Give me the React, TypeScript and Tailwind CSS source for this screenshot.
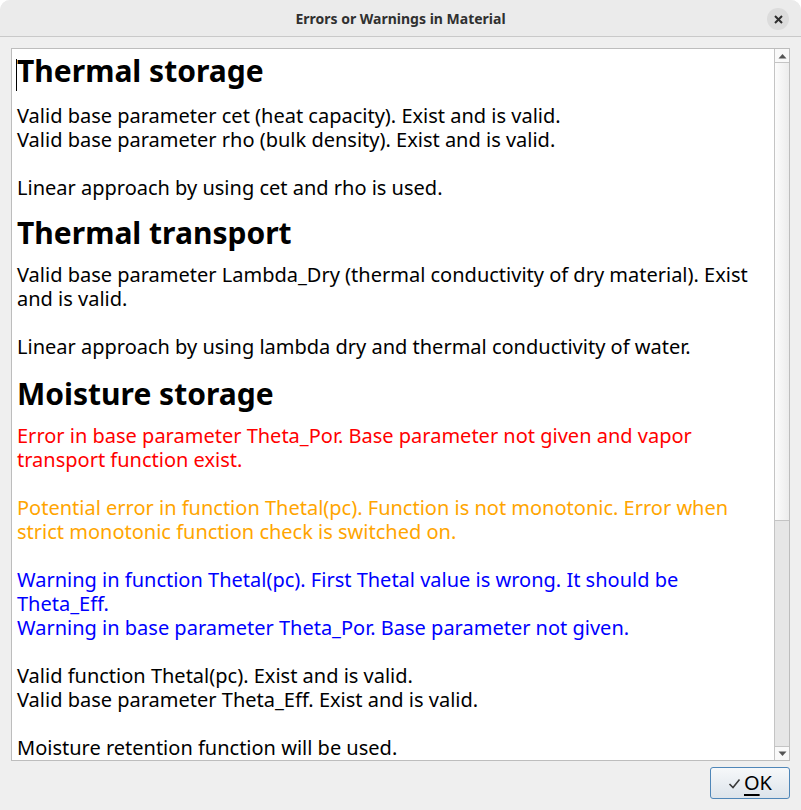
import React from "react";

function Para({ lines, color }: { lines: string[]; color: string }) {
  return (
    <div className={color}>
      {lines.map((l, i) => (
        <div key={i} className="h-6 leading-6 whitespace-nowrap">
          {l}
        </div>
      ))}
    </div>
  );
}

function Heading({ children }: { children: React.ReactNode }) {
  return (
    <h1 className="text-[30px] font-bold leading-[36px] whitespace-nowrap text-black">
      {children}
    </h1>
  );
}

function ScrollBar() {
  return (
    <div className="w-[15px] shrink-0 border-l border-[#c4c4c4] flex flex-col bg-[#e6e6e6]">
      <div className="h-[14px] border-b border-[#c4c4c4] bg-[#f9f9f9] flex items-center justify-center">
        <svg width="9" height="6" viewBox="0 0 9 6">
          <path d="M0.5 5.5 L4.5 1 L8.5 5.5 Z" fill="#555" />
        </svg>
      </div>
      <div className="h-[458px] border-b border-[#c4c4c4] bg-gradient-to-r from-[#fcfcfc] to-[#ececec]" />
      <div className="flex-1" />
      <div className="h-[14px] border-t border-[#c4c4c4] bg-[#f9f9f9] flex items-center justify-center">
        <svg width="9" height="6" viewBox="0 0 9 6">
          <path d="M0.5 0.5 L4.5 5 L8.5 0.5 Z" fill="#555" />
        </svg>
      </div>
    </div>
  );
}

export default function App() {
  return (
    <div
      className="w-[801px] h-[810px] bg-[#efefef] flex flex-col overflow-hidden rounded-t-[10px]"
      style={{ fontFamily: '"Noto Sans", "DejaVu Sans", sans-serif' }}
    >
      {/* Title bar */}
      <div className="h-[37px] shrink-0 bg-[#ebebeb] border-b border-[#c9c9c9] flex items-center relative">
        <div className="flex-1 text-center text-[14px] font-bold text-[#303030]">
          Errors or Warnings in Material
        </div>
        <div className="absolute right-[12px] top-[8px] w-[22px] h-[22px] rounded-full bg-[#dcdcdc] flex items-center justify-center">
          <svg width="9" height="9" viewBox="0 0 9 9">
            <path d="M1 1 L8 8 M8 1 L1 8" stroke="#2e2e2e" strokeWidth="2" />
          </svg>
        </div>
      </div>

      {/* Text area */}
      <div className="mt-[11px] mx-[11px] h-[713px] border border-[#bdbdbd] bg-white flex">
        <div className="flex-1 overflow-hidden pl-[5px] pt-[4px] text-[20px] leading-6 text-black relative">
          <div className="absolute left-[4px] top-[10px] w-px h-[32px] bg-black" />
          <Heading>Thermal storage</Heading>
          <div className="mt-[15px]">
            <Para
              color="text-black"
              lines={[
                "Valid base parameter cet (heat capacity). Exist and is valid.",
                "Valid base parameter rho (bulk density). Exist and is valid.",
                "",
                "Linear approach by using cet and rho is used.",
              ]}
            />
          </div>
          <div className="mt-[15px]">
            <Heading>Thermal transport</Heading>
          </div>
          <div className="mt-[12px]">
            <Para
              color="text-black"
              lines={[
                "Valid base parameter Lambda_Dry (thermal conductivity of dry material). Exist",
                "and is valid.",
                "",
                "Linear approach by using lambda dry and thermal conductivity of water.",
              ]}
            />
          </div>
          <div className="mt-[17px]">
            <Heading>Moisture storage</Heading>
          </div>
          <div className="mt-[12px]">
            <Para
              color="text-[#ff0000]"
              lines={[
                "Error in base parameter Theta_Por. Base parameter not given and vapor",
                "transport function exist.",
                "",
              ]}
            />
            <Para
              color="text-[#ffa500]"
              lines={[
                "Potential error in function Thetal(pc). Function is not monotonic. Error when",
                "strict monotonic function check is switched on.",
                "",
              ]}
            />
            <Para
              color="text-[#0000ff]"
              lines={[
                "Warning in function Thetal(pc). First Thetal value is wrong. It should be",
                "Theta_Eff.",
                "Warning in base parameter Theta_Por. Base parameter not given.",
                "",
              ]}
            />
            <Para
              color="text-black"
              lines={[
                "Valid function Thetal(pc). Exist and is valid.",
                "Valid base parameter Theta_Eff. Exist and is valid.",
                "",
                "Moisture retention function will be used.",
              ]}
            />
          </div>
        </div>
        <ScrollBar />
      </div>

      {/* Footer */}
      <div className="flex justify-end pr-[11px] pt-[6px]">
        <button className="w-[80px] h-[32px] rounded-[3px] border border-[#4f86b8] bg-gradient-to-b from-[#f6f8fa] to-[#dde4eb] flex items-center justify-center gap-[2px] text-[20px] text-black">
          <svg width="13" height="11" viewBox="0 0 13 11" className="mr-[1px]">
            <path d="M1.5 6 L5 9.5 L11.5 1.5" stroke="#3a3a3a" strokeWidth="1.6" fill="none" />
          </svg>
          <span className="leading-none">
            <span className="underline underline-offset-[4px]">O</span>K
          </span>
        </button>
      </div>
    </div>
  );
}
